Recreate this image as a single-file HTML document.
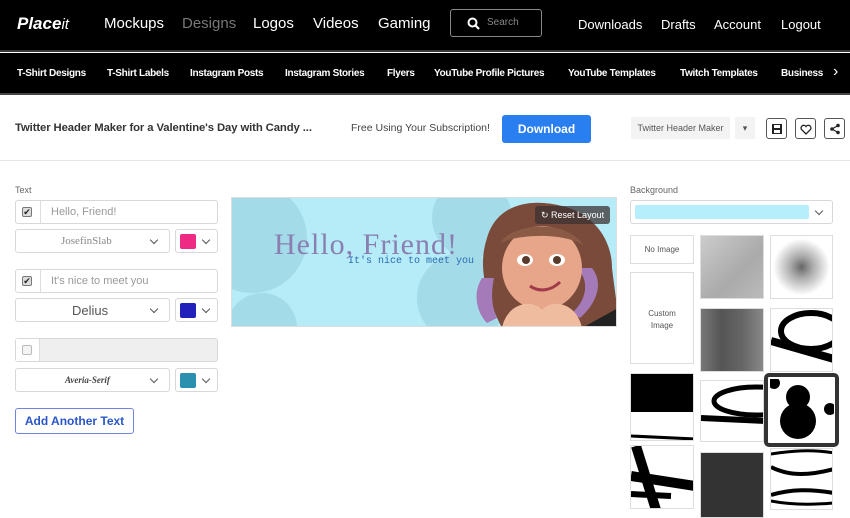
<!DOCTYPE html>
<html><head><meta charset="utf-8"><style>
*{box-sizing:border-box;margin:0;padding:0}
body{width:850px;height:518px;overflow:hidden;background:#fff;font-family:"Liberation Sans",sans-serif;position:relative}
.a{position:absolute}
.nav1{left:0;top:0;width:850px;height:52px;background:#000;border-bottom:2px solid #3a3a3a}
.nav1 span{position:absolute;top:15px;color:#fff;font-size:15px}
.nav2{left:0;top:53px;width:850px;height:42px;background:#000;border-bottom:2px solid #444}
.nav2 span{position:absolute;top:15px;color:#fff;font-size:10px;font-weight:bold;white-space:nowrap;letter-spacing:-0.3px}
.box{position:absolute;border:1px solid #d8d8d8;border-radius:3px;background:#fff}
.chk{position:absolute;width:10px;height:10px;border:1px solid #777;border-radius:2px;background:#eee;font-size:9px;line-height:8px;text-align:center;color:#222}
.chev{position:absolute;width:6px;height:6px;border-right:1.5px solid #555;border-bottom:1.5px solid #555;transform:rotate(45deg)}
.tile{position:absolute;border:1px solid #ddd;background:#fff;overflow:hidden}
.ib{position:absolute;width:21px;height:21px;border:1px solid #555;border-radius:3px;top:118px}
</style></head><body>
<div class="a nav1">
<span style="left:17px;font-weight:bold;font-style:italic;font-size:17px;top:14px">Place<span style="position:static;font-weight:normal">it</span></span>
<span style="left:104px">Mockups</span>
<span style="left:182px;color:#777">Designs</span>
<span style="left:253px">Logos</span>
<span style="left:313px">Videos</span>
<span style="left:378px">Gaming</span>
<div class="a" style="left:450px;top:9px;width:92px;height:28px;border:1px solid #888;border-radius:3px">
<svg class="a" style="left:16px;top:7px" width="13" height="13" viewBox="0 0 13 13"><circle cx="5.5" cy="5.5" r="4" fill="none" stroke="#fff" stroke-width="2"/><path d="M8.5 8.5L12 12" stroke="#fff" stroke-width="2.2"/></svg>
<span style="left:36px;top:7px;font-size:10px;color:#888">Search</span></div>
<span style="left:578px;font-size:13px;top:17px">Downloads</span>
<span style="left:661px;font-size:13px;top:17px">Drafts</span>
<span style="left:714px;font-size:13px;top:17px">Account</span>
<span style="left:781px;font-size:13px;top:17px">Logout</span>
</div>
<div class="a nav2">
<span style="left:17px">T-Shirt Designs</span>
<span style="left:107px">T-Shirt Labels</span>
<span style="left:190px">Instagram Posts</span>
<span style="left:285px">Instagram Stories</span>
<span style="left:387px">Flyers</span>
<span style="left:434px">YouTube Profile Pictures</span>
<span style="left:568px">YouTube Templates</span>
<span style="left:680px">Twitch Templates</span>
<span style="left:781px">Business C</span>
<div class="a" style="left:826px;top:0;width:24px;height:40px;background:#000"></div>
<span style="left:833px;font-size:16px;top:10px;font-weight:normal">›</span>
</div>
<div class="a" style="left:15px;top:122px;font-size:11.3px;color:#333;font-weight:bold;letter-spacing:-0.1px">Twitter Header Maker for a Valentine's Day with Candy ...</div>
<div class="a" style="left:351px;top:122px;font-size:10.5px;color:#444">Free Using Your Subscription!</div>
<div class="a" style="left:502px;top:115px;width:89px;height:28px;background:#2a7ff0;border-radius:3px;color:#fff;font-weight:bold;font-size:12px;text-align:center;line-height:28px">Download</div>
<div class="a" style="left:631px;top:117px;width:99px;height:22px;background:#f3f3f3;border-radius:2px;font-size:9px;color:#555;text-align:center;line-height:22px">Twitter Header Maker</div>
<div class="a" style="left:735px;top:117px;width:20px;height:22px;background:#f3f3f3;font-size:9px;text-align:center;line-height:22px;color:#555">▾</div>
<div class="ib" style="left:766px"><svg class="a" style="left:4px;top:4px" width="12" height="12"><rect x="1" y="1" width="10" height="10" fill="#222"/><rect x="3" y="2" width="6" height="3" fill="#fff"/><rect x="3" y="7" width="6" height="3" fill="#fff"/></svg></div>
<div class="ib" style="left:795px"><svg class="a" style="left:4px;top:5px" width="12" height="11"><path d="M6 10L1.5 5.5A2.5 2.5 0 0 1 6 2.5A2.5 2.5 0 0 1 10.5 5.5Z" fill="none" stroke="#222" stroke-width="1.3"/></svg></div>
<div class="ib" style="left:824px"><svg class="a" style="left:4px;top:4px" width="12" height="12"><circle cx="3" cy="6" r="1.8" fill="#222"/><circle cx="9" cy="2.5" r="1.8" fill="#222"/><circle cx="9" cy="9.5" r="1.8" fill="#222"/><path d="M3 6L9 2.5M3 6L9 9.5" stroke="#222" stroke-width="1.2"/></svg></div>
<div class="a" style="left:0;top:160px;width:850px;height:1px;background:#e6e6e6"></div>

<div class="a" style="left:15px;top:185px;font-size:9px;color:#666">Text</div>
<div class="box" style="left:15px;top:200px;width:203px;height:24px"><div class="a" style="left:24px;top:0;width:1px;height:22px;background:#ddd"></div><div class="chk" style="left:6px;top:6px;background:#ddd">✔</div><span class="a" style="left:35px;top:5px;font-size:11px;color:#999">Hello, Friend!</span></div>
<div class="box" style="left:15px;top:229px;width:155px;height:24px"><span class="a" style="left:45px;top:5px;font-family:'Liberation Serif',serif;font-size:11px;color:#888">JosefinSlab</span><div class="chev" style="left:135px;top:7px"></div></div>
<div class="box" style="left:175px;top:229px;width:43px;height:24px"><div class="a" style="left:4px;top:4px;width:16px;height:15px;background:#ee2a85;border-radius:2px"></div><div class="chev" style="left:27px;top:7px"></div></div>
<div class="box" style="left:15px;top:269px;width:203px;height:24px"><div class="a" style="left:24px;top:0;width:1px;height:22px;background:#ddd"></div><div class="chk" style="left:6px;top:6px;background:#ddd">✔</div><span class="a" style="left:35px;top:5px;font-size:11px;color:#999">It's nice to meet you</span></div>
<div class="box" style="left:15px;top:298px;width:155px;height:24px"><span class="a" style="left:56px;top:4px;font-size:13px;color:#555">Delius</span><div class="chev" style="left:135px;top:7px"></div></div>
<div class="box" style="left:175px;top:298px;width:43px;height:24px"><div class="a" style="left:4px;top:4px;width:16px;height:15px;background:#2222bb;border-radius:2px"></div><div class="chev" style="left:27px;top:7px"></div></div>
<div class="box" style="left:15px;top:338px;width:203px;height:24px;background:#efefef"><div class="a" style="left:0;top:0;width:24px;height:22px;background:#fff;border-right:1px solid #ddd"></div><div class="chk" style="left:6px;top:6px;background:#f4f4f4;border-color:#bbb"></div></div>
<div class="box" style="left:15px;top:368px;width:155px;height:24px"><span class="a" style="left:49px;top:6px;font-family:'Liberation Serif',serif;font-style:italic;font-weight:bold;font-size:9px;color:#444">Averia-Serif</span><div class="chev" style="left:135px;top:7px"></div></div>
<div class="box" style="left:175px;top:368px;width:43px;height:24px"><div class="a" style="left:4px;top:4px;width:16px;height:15px;background:#2b8fb0;border-radius:2px"></div><div class="chev" style="left:27px;top:7px"></div></div>
<div class="a" style="left:15px;top:408px;width:119px;height:26px;border:1px solid #6f86e0;border-radius:3px;color:#2a55c8;font-weight:bold;font-size:12px;text-align:center;line-height:24px">Add Another Text</div>

<div class="a" style="left:231px;top:197px;width:386px;height:130px;background:#b5ecf8;overflow:hidden;border:1px solid #ddd">
<svg class="a" style="left:0;top:0" width="386" height="130">
<circle cx="20" cy="40" r="55" fill="#a4dbe9"/><circle cx="240" cy="20" r="40" fill="#a4dbe9"/><circle cx="230" cy="100" r="45" fill="#a4dbe9"/><circle cx="30" cy="130" r="35" fill="#a4dbe9"/>
<path d="M270 130 C255 100 245 70 255 40 C265 5 300 0 330 8 C360 15 380 40 380 70 C383 95 386 110 386 130Z" fill="#7a4a3a"/>
<path d="M250 80 C240 95 245 115 255 125 L265 120 C258 105 260 90 262 80Z" fill="#a47ab8"/>
<path d="M345 70 C360 85 352 105 340 115 L348 120 C365 105 372 85 360 70Z" fill="#a47ab8"/>
<ellipse cx="310" cy="70" rx="40" ry="42" fill="#e7a68a"/>
<path d="M268 45 C280 25 335 20 352 48 C335 35 290 35 268 45Z" fill="#8b5a45"/>
<ellipse cx="293" cy="62" rx="8" ry="6" fill="#fff"/><circle cx="294" cy="62" r="4" fill="#5a3a2a"/>
<ellipse cx="325" cy="62" rx="8" ry="6" fill="#fff"/><circle cx="325" cy="62" r="4" fill="#5a3a2a"/>
<path d="M298 88 C308 95 320 92 328 84" stroke="#a03a4a" stroke-width="3" fill="none"/>
<path d="M270 130 C275 105 300 100 310 112 C320 100 345 105 350 130Z" fill="#f0bca0"/>
<path d="M350 130 L386 110 L386 130Z" fill="#222"/>
</svg>
<div class="a" style="left:42px;top:30px;font-family:'Liberation Serif',serif;font-size:30px;color:#8a7fb0;letter-spacing:1px">Hello, Friend!</div>
<div class="a" style="left:116px;top:58px;font-family:'Liberation Mono',monospace;font-size:10px;color:#2a6ab0">It's nice to meet you</div>
<div class="a" style="left:303px;top:8px;width:75px;height:18px;background:rgba(60,50,50,.75);border-radius:3px;color:#fff;font-size:9px;line-height:18px;padding-left:6px">↻ Reset Layout</div>
</div>

<div class="a" style="left:630px;top:185px;font-size:9px;color:#666">Background</div>
<div class="box" style="left:630px;top:200px;width:203px;height:24px"><div class="a" style="left:4px;top:4px;width:174px;height:14px;background:#b7eefb;border-radius:2px"></div><div class="chev" style="left:185px;top:7px"></div></div>
<div class="tile" style="left:630px;top:235px;width:64px;height:29px;font-size:8px;color:#555;text-align:center;line-height:27px">No Image</div>
<div class="tile" style="left:630px;top:272px;width:64px;height:92px;font-size:8px;color:#555;text-align:center;padding-top:35px;line-height:12px">Custom<br>Image</div>
<div class="tile" style="left:700px;top:235px;width:64px;height:64px;background:linear-gradient(135deg,#ccc,#aaa 60%,#bbb)"></div>
<div class="tile" style="left:770px;top:235px;width:63px;height:64px;background:radial-gradient(circle,#666 0,#aaa 25%,#fff 65%)"></div>
<div class="tile" style="left:700px;top:308px;width:64px;height:64px;background:linear-gradient(90deg,#777,#555,#666,#888)"></div>
<div class="tile" style="left:770px;top:308px;width:63px;height:64px"><svg width="63" height="64"><ellipse cx="40" cy="22" rx="30" ry="18" fill="none" stroke="#000" stroke-width="6"/><path d="M0 32 L63 50" stroke="#000" stroke-width="8"/></svg></div>
<div class="tile" style="left:630px;top:373px;width:64px;height:68px"><div class="a" style="left:0;top:0;width:64px;height:38px;background:#000"></div><svg class="a" style="top:50px" width="64" height="18"><path d="M0 12 L64 15" stroke="#000" stroke-width="3"/></svg></div>
<div class="tile" style="left:700px;top:380px;width:64px;height:62px"><svg width="64" height="62"><ellipse cx="55" cy="20" rx="42" ry="14" fill="none" stroke="#000" stroke-width="5"/><path d="M0 37 L64 40" stroke="#000" stroke-width="6"/></svg></div>
<div class="a" style="left:764px;top:373px;width:75px;height:74px;border:4px solid #333;border-radius:5px;background:#fff"><svg class="a" style="left:2px;top:2px" width="64" height="64"><circle cx="4" cy="4" r="6" fill="#000"/><circle cx="28" cy="18" r="12" fill="#000"/><circle cx="28" cy="42" r="18" fill="#000"/><circle cx="60" cy="30" r="6" fill="#000"/></svg></div>
<div class="tile" style="left:630px;top:445px;width:64px;height:64px"><svg width="64" height="64"><path d="M5 0 L25 64" stroke="#000" stroke-width="10"/><path d="M0 30 L64 40" stroke="#000" stroke-width="10"/><path d="M0 48 L40 50" stroke="#000" stroke-width="6"/></svg></div>
<div class="tile" style="left:700px;top:452px;width:64px;height:66px;background:#333"></div>
<div class="tile" style="left:770px;top:448px;width:63px;height:62px"><svg width="63" height="62"><path d="M0 5 C20 2 40 0 63 4" stroke="#000" stroke-width="3" fill="none"/><path d="M0 18 C20 28 40 26 63 20" stroke="#000" stroke-width="4" fill="none"/><path d="M0 46 C20 40 40 40 63 44" stroke="#000" stroke-width="4" fill="none"/><path d="M0 52 C20 56 40 56 63 54" stroke="#000" stroke-width="3" fill="none"/></svg></div>
</body></html>
